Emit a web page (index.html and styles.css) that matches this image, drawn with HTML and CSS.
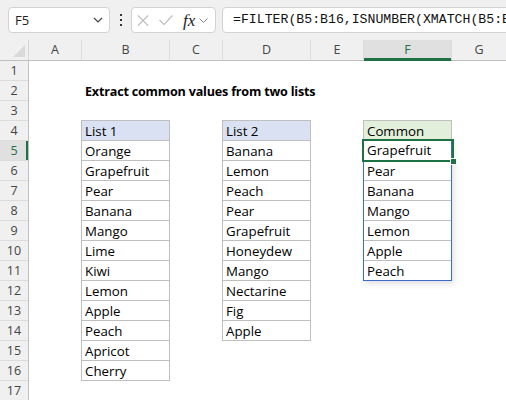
FILE: index.html
```html
<!DOCTYPE html>
<html>
<head>
<meta charset="utf-8">
<link rel="stylesheet" href="styles.css">
</head>
<body>
<div class="app">
  <div class="toolbar">
    <div class="namebox">
      <span class="nb-text">F5</span>
      <svg class="chev" width="10" height="6" viewBox="0 0 10 6"><path d="M1 1 L5 5 L9 1" fill="none" stroke="#444" stroke-width="1.2"/></svg>
    </div>
    <div class="dots">
      <svg width="4" height="12" viewBox="0 0 4 12"><rect x="1" y="0" width="2" height="2" fill="#333"/><rect x="1" y="5" width="2" height="2" fill="#333"/><rect x="1" y="10" width="2" height="2" fill="#333"/></svg>
    </div>
    <div class="fxbox">
      <svg class="ic-x" width="12" height="11" viewBox="0 0 12 11"><path d="M1 0.5 L11 10.5 M11 0.5 L1 10.5" stroke="#bdbdbd" stroke-width="1.1" fill="none"/></svg>
      <svg class="ic-ok" width="14" height="10" viewBox="0 0 14 10"><path d="M0.5 5 L5 9.5 L13.5 0.5" stroke="#bdbdbd" stroke-width="1.1" fill="none"/></svg>
      <span class="fx">fx</span>
      <svg class="chev-s" width="9" height="5" viewBox="0 0 9 5"><path d="M0.5 0.5 L4.5 4.5 L8.5 0.5" fill="none" stroke="#888" stroke-width="1"/></svg>
    </div>
    <div class="formula">=FILTER(B5:B16,ISNUMBER(XMATCH(B5:B16,D5:D14)))</div>
  </div>

  <div class="colheads">
    <div class="corner"><span class="tri"></span></div>
    <div class="ch w-a">A</div>
    <div class="ch w-b">B</div>
    <div class="ch w-a">C</div>
    <div class="ch w-b">D</div>
    <div class="ch w-a">E</div>
    <div class="ch w-b sel">F</div>
    <div class="ch w-rest">G</div>
  </div>

  <div class="main">
    <div class="rowheads">
      <div class="rh">1</div>
      <div class="rh">2</div>
      <div class="rh">3</div>
      <div class="rh">4</div>
      <div class="rh sel">5</div>
      <div class="rh">6</div>
      <div class="rh">7</div>
      <div class="rh">8</div>
      <div class="rh">9</div>
      <div class="rh">10</div>
      <div class="rh">11</div>
      <div class="rh">12</div>
      <div class="rh">13</div>
      <div class="rh">14</div>
      <div class="rh">15</div>
      <div class="rh">16</div>
      <div class="rh">17</div>
    </div>
    <div class="cells">
      <div class="title">Extract common values from two lists</div>

      <div class="list list1">
        <div class="cell head blue">List 1</div>
        <div class="cell">Orange</div>
        <div class="cell">Grapefruit</div>
        <div class="cell">Pear</div>
        <div class="cell">Banana</div>
        <div class="cell">Mango</div>
        <div class="cell">Lime</div>
        <div class="cell">Kiwi</div>
        <div class="cell">Lemon</div>
        <div class="cell">Apple</div>
        <div class="cell">Peach</div>
        <div class="cell">Apricot</div>
        <div class="cell last">Cherry</div>
      </div>

      <div class="list list2">
        <div class="cell head blue">List 2</div>
        <div class="cell">Banana</div>
        <div class="cell">Lemon</div>
        <div class="cell">Peach</div>
        <div class="cell">Pear</div>
        <div class="cell">Grapefruit</div>
        <div class="cell">Honeydew</div>
        <div class="cell">Mango</div>
        <div class="cell">Nectarine</div>
        <div class="cell">Fig</div>
        <div class="cell last">Apple</div>
      </div>

      <div class="list3">
        <div class="cell head green">Common</div>
        <div class="spill">
          <div class="scell first">Grapefruit</div>
          <div class="scell">Pear</div>
          <div class="scell">Banana</div>
          <div class="scell">Mango</div>
          <div class="scell">Lemon</div>
          <div class="scell">Apple</div>
          <div class="scell">Peach</div>
          <div class="active"><span class="handle"></span></div>
        </div>
      </div>
    </div>
  </div>
</div>
</body>
</html>
```

FILE: styles.css
```css
* { box-sizing: border-box; }
html, body { margin: 0; padding: 0; }
body {
  width: 506px;
  height: 400px;
  overflow: hidden;
  background: #ffffff;
  font-family: "Open Sans", "Noto Sans", sans-serif;
}
.app { width: 506px; height: 400px; overflow: hidden; }

.toolbar {
  height: 40px;
  background: #f0f0f0;
  display: flex;
  align-items: flex-start;
  padding: 7px 0 0 8px;
  overflow: hidden;
}
.namebox {
  flex: none;
  width: 102px;
  height: 26px;
  background: #fff;
  border: 1px solid #d2d2d2;
  border-radius: 4px;
  display: flex;
  align-items: center;
  padding: 0 0 0 6px;
}
.nb-text { font-size: 13px; color: #222; flex: 1; }
.chev { margin-right: 6px; }
.dots {
  flex: none;
  width: 21px;
  height: 26px;
  display: flex;
  align-items: center;
  justify-content: center;
}
.fxbox {
  flex: none;
  width: 85px;
  height: 26px;
  background: #fff;
  border: 1px solid #d2d2d2;
  border-radius: 4px;
  display: flex;
  align-items: center;
  padding-left: 5px;
}
.ic-x { margin-right: 10px; }
.ic-ok { margin-right: 10px; }
.fx {
  font-family: "Liberation Serif", "DejaVu Serif", serif;
  font-style: italic;
  font-size: 17px;
  color: #222;
  margin-right: 4px;
  line-height: 1;
}
.formula {
  flex: none;
  width: 420px;
  height: 26px;
  margin-left: 6px;
  background: #fff;
  border: 1px solid #d2d2d2;
  border-radius: 4px;
  font-family: "Liberation Mono", "DejaVu Sans Mono", monospace;
  font-size: 13.2px;
  color: #111;
  line-height: 24px;
  padding-left: 10px;
  white-space: nowrap;
  overflow: hidden;
}

.colheads {
  height: 21px;
  display: flex;
  background: #f0f0f0;
  border-bottom: 1px solid #c0c0c0;
}
.corner {
  flex: none;
  width: 29px;
  position: relative;
  border-right: 1px solid #d6d6d6;
}
.tri {
  position: absolute;
  right: 3px;
  bottom: 3px;
  width: 0;
  height: 0;
  border-left: 12px solid transparent;
  border-bottom: 12px solid #dadada;
}
.ch {
  flex: none;
  height: 20px;
  border-right: 1px solid #dcdcdc;
  text-align: center;
  font-size: 12.5px;
  line-height: 20px;
  color: #444;
}
.w-a { width: 53px; }
.w-b { width: 88px; }
.w-rest { flex: 1; border-right: none; }
.ch.sel {
  background: #e0e0e0;
  color: #1e7145;
  box-shadow: inset 0 -2px 0 #1e7145;
  height: 21px;
  margin-bottom: -1px;
  border-bottom: 1px solid #1e7145;
}

.main { display: flex; }
.rowheads {
  flex: none;
  width: 29px;
  display: flex;
  flex-direction: column;
  background: #f0f0f0;
  border-right: 1px solid #c0c0c0;
}
.rh {
  height: 20px;
  border-bottom: 1px solid #dcdcdc;
  text-align: center;
  font-size: 12.5px;
  line-height: 20px;
  color: #444;
}
.rh.sel {
  background: #e0e0e0;
  color: #1e7145;
  box-shadow: inset -2px 0 0 #1e7145;
}

.cells {
  flex: 1;
  display: grid;
  grid-template-columns: 53px 88px 53px 88px 53px 88px 1fr;
  grid-template-rows: repeat(17, 20px);
  font-size: 13.3px;
  color: #000;
}
.title {
  grid-column: 2 / span 5;
  grid-row: 2;
  font-weight: bold;
  font-size: 12.6px;
  letter-spacing: -0.2px;
  padding-left: 3px;
  line-height: 21px;
  white-space: nowrap;
}
.list {
  margin: -1px 0 0 -1px;
  border-left: 1px solid #bfbfbf;
  border-right: 1px solid #bfbfbf;
  align-self: start;
}
.list1 { grid-column: 2; grid-row: 4 / span 13; }
.list2 { grid-column: 4; grid-row: 4 / span 11; }
.cell {
  height: 20px;
  border-top: 1px solid #bfbfbf;
  padding-left: 3px;
  line-height: 20px;
  white-space: nowrap;
}
.cell.last { height: 21px; border-bottom: 1px solid #bfbfbf; }
.cell.head.blue { background: #d9e1f2; }
.cell.head.green { background: #e2efda; }

.list3 {
  grid-column: 6;
  grid-row: 4 / span 8;
  margin: -1px 0 0 -1px;
  align-self: start;
}
.list3 .cell.head {
  border-left: 1px solid #bfbfbf;
  border-right: 1px solid #bfbfbf;
}
.spill {
  position: relative;
  border: 1px solid #3a6bc8;
  box-shadow: 2px 3px 6px rgba(0, 0, 0, 0.12);
}
.scell {
  height: 20px;
  border-top: 1px solid #bfbfbf;
  padding-left: 3px;
  line-height: 20px;
  white-space: nowrap;
}
.scell.first { height: 19px; border-top: none; line-height: 19px; }
.active {
  position: absolute;
  left: -2px;
  top: -2px;
  width: 92px;
  height: 23px;
  border: 2px solid #1e7145;
}
.handle {
  position: absolute;
  right: -5px;
  bottom: -5px;
  width: 7px;
  height: 7px;
  background: #1e7145;
  border: 1px solid #fff;
}
```
